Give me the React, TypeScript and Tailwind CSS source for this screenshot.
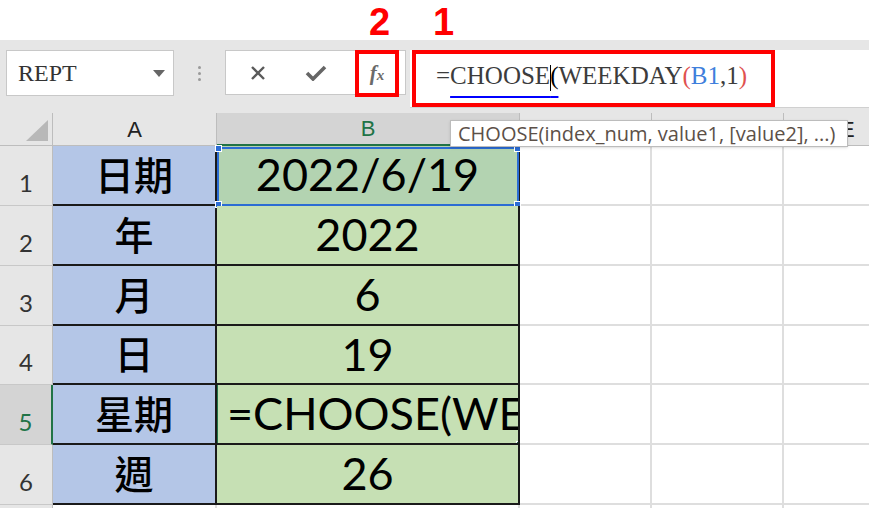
import React from 'react';

const rows = [
  { n: 1, a: '日期', b: '2022/6/19' },
  { n: 2, a: '年', b: '2022' },
  { n: 3, a: '月', b: '6' },
  { n: 4, a: '日', b: '19' },
  { n: 5, a: '星期', b: '=CHOOSE(WEEKDAY(B1,1)' },
  { n: 6, a: '週', b: '26' },
];

function Handle({ className }: { className: string }) {
  return <div className={`absolute w-[7px] h-[7px] bg-[#2b6cd4] border border-white ${className}`} />;
}

export default function App() {
  return (
    <div className="relative w-[869px] h-[508px] overflow-hidden bg-white font-['Lato','Noto_Sans_CJK_TC',sans-serif]">
      {/* annotation numbers */}
      <div className="absolute left-[369px] top-[0px] text-[38px] font-bold leading-[44px] text-[#ff0000] font-['Liberation_Sans',sans-serif]">2</div>
      <div className="absolute left-[433px] top-[0px] text-[38px] font-bold leading-[44px] text-[#ff0000] font-['Liberation_Sans',sans-serif]">1</div>

      <div className="h-[40px]" />

      {/* toolbar */}
      <div className="h-[73px] bg-[#e6e6e6] flex items-start pt-[10px]">
        <div className="ml-[6px] w-[168px] h-[46px] bg-white border border-[#c8c8c8] flex items-center justify-between pl-[11px] pr-[8px]">
          <span className="font-['Liberation_Serif',serif] text-[24px] text-[#333] leading-none">REPT</span>
          <svg width="12" height="7" viewBox="0 0 12 7"><path d="M0 0 L12 0 L6 7 Z" fill="#666" /></svg>
        </div>
        <div className="w-[51px] h-[46px] flex flex-col items-center justify-center gap-[3px]">
          <div className="w-[3px] h-[3px] rounded-full bg-[#9a9a9a]" />
          <div className="w-[3px] h-[3px] rounded-full bg-[#9a9a9a]" />
          <div className="w-[3px] h-[3px] rounded-full bg-[#9a9a9a]" />
        </div>
        <div className="w-[181px] h-[45px] bg-white border border-[#c8c8c8] flex items-start">
          <div className="w-[60px] h-[43px] flex items-center justify-center pl-[4px]">
            <svg width="16" height="16" viewBox="0 0 16 16"><path d="M2 2 L14 14 M14 2 L2 14" stroke="#5a5a5a" strokeWidth="2.4" /></svg>
          </div>
          <div className="w-[60px] h-[43px] flex items-center justify-center">
            <svg width="22" height="16" viewBox="0 0 22 16"><path d="M2 8 L8 14 L20 2" stroke="#666" strokeWidth="3.6" fill="none" /></svg>
          </div>
          <div className="ml-[9px] -mt-[1px] w-[44px] h-[47px] border-4 border-[#ff0000] flex items-center justify-center">
            <span className="font-['Liberation_Serif',serif] italic font-bold text-[21px] text-[#6a6a6a] leading-none">f<span className="text-[15px]">x</span></span>
          </div>
        </div>
        <div className="ml-[4px] flex-1 h-[58px] bg-white border-b border-[#d0d0d0]">
          <div className="ml-[2px] w-[363px] h-[57px] border-4 border-[#ff0000] pl-[20px] pt-[7px]">
            <div className="font-['Liberation_Serif',serif] text-[25px] leading-[30px] text-[#3c3c3c] whitespace-nowrap">
              =<span className="underline decoration-[#0000ff] decoration-2 underline-offset-[12px]">CHOOSE<span className="inline-block align-middle w-[1px] h-[26px] bg-black -mr-[1px]" /><span className="text-black">(</span></span>WEEKDAY<span className="text-[#e0524f]">(</span><span className="text-[#3f7fdc]">B1</span>,1<span className="text-[#e0524f]">)</span>
            </div>
          </div>
        </div>
      </div>

      {/* sheet */}
      <div className="grid grid-cols-[53px_164px_303px_132px_132px_1fr] grid-rows-[33px_60px_60px_60px_59px_60px_60px_1fr] h-[395px]">
        <div className="bg-[#e6e6e6] border-r border-b border-[#bdbdbd] flex items-end justify-end p-[4px]">
          <svg width="22" height="21" viewBox="0 0 22 21"><path d="M22 0 L22 21 L0 21 Z" fill="#b8b8b8" /></svg>
        </div>
        <div className="bg-[#e6e6e6] border-r border-b border-[#bdbdbd] flex items-center justify-center text-[22px] text-[#222] font-['Liberation_Sans',sans-serif]">A</div>
        <div className="bg-[#d4d4d4] border-r border-[#bdbdbd] border-b-2 border-b-[#217346] flex items-center justify-center text-[22px] text-[#217346] font-['Liberation_Sans',sans-serif]">B</div>
        <div className="bg-[#e6e6e6] border-r border-b border-[#bdbdbd]" />
        <div className="bg-[#e6e6e6] border-r border-b border-[#bdbdbd]" />
        <div className="bg-[#e6e6e6] border-b border-[#bdbdbd] flex items-center justify-start pl-[56px] text-[22px] text-[#222] font-['Liberation_Sans',sans-serif]">E</div>

        {rows.map((r) => (
          <React.Fragment key={r.n}>
            <div className={r.n === 5
              ? 'bg-[#d4d4d4] border-b border-b-[#c8c8c8] border-r-2 border-r-[#217346] flex items-end justify-center pb-[10px] text-[24px] leading-none text-[#217346]'
              : 'bg-[#e6e6e6] border-b border-b-[#c8c8c8] border-r border-r-[#bdbdbd] flex items-end justify-center pb-[10px] text-[24px] leading-none text-[#333]'}>
              {r.n}
            </div>
            <div className="bg-[#b4c6e7] border-r-2 border-b-2 border-[#1a1a1a] flex items-center justify-center text-[39px] font-medium text-black">
              {r.a}
            </div>
            <div className={r.n === 1
              ? 'relative bg-[#b3d3b1] border-r-2 border-b-2 border-[#1a1a1a] flex items-center justify-center text-[45px] text-black'
              : r.n === 5
                ? 'relative bg-[#c6e0b4] border-r-2 border-b-2 border-[#1a1a1a] flex items-center justify-start pl-[10px] overflow-hidden whitespace-nowrap text-[45px] text-black'
                : 'relative bg-[#c6e0b4] border-r-2 border-b-2 border-[#1a1a1a] flex items-center justify-center text-[45px] text-black'}>
              {r.b}
              {r.n === 1 && (
                <div className="absolute left-0 top-[1px] right-[-1px] bottom-[-2px] border-2 border-[#2b6cd4]">
                  <Handle className="-left-[4px] -top-[4px]" />
                  <Handle className="-right-[4px] -top-[4px]" />
                  <Handle className="-left-[4px] -bottom-[4px]" />
                  <Handle className="-right-[4px] -bottom-[4px]" />
                </div>
              )}
              {r.n === 5 && (
                <div className="absolute -left-[1px] -top-[2px] right-[-2px] bottom-[-2px] border-2 border-[#217346]">
                  <div className="absolute -right-[4px] -bottom-[4px] w-[6px] h-[6px] bg-[#217346] border border-white" />
                </div>
              )}
            </div>
            <div className="border-r-2 border-b-2 border-[#dedede]" />
            <div className="border-r-2 border-b-2 border-[#dedede]" />
            <div className="border-b-2 border-[#dedede]" />
          </React.Fragment>
        ))}
        <div className="bg-[#e6e6e6] border-r border-[#bdbdbd]" />
        <div className="border-r-2 border-[#dedede]" />
        <div className="border-r-2 border-[#dedede]" />
        <div className="border-r-2 border-[#dedede]" />
        <div className="border-r-2 border-[#dedede]" />
        <div />
      </div>

      {/* function tooltip */}
      <div className="absolute left-[450px] top-[120px] w-[398px] h-[27px] bg-white border border-[#bcbcbc] shadow-sm flex items-center pl-[7px] font-['Open_Sans',sans-serif] text-[20px] text-[#5c5048] whitespace-nowrap">
        CHOOSE(index_num, value1, [value2], ...)
      </div>
    </div>
  );
}
